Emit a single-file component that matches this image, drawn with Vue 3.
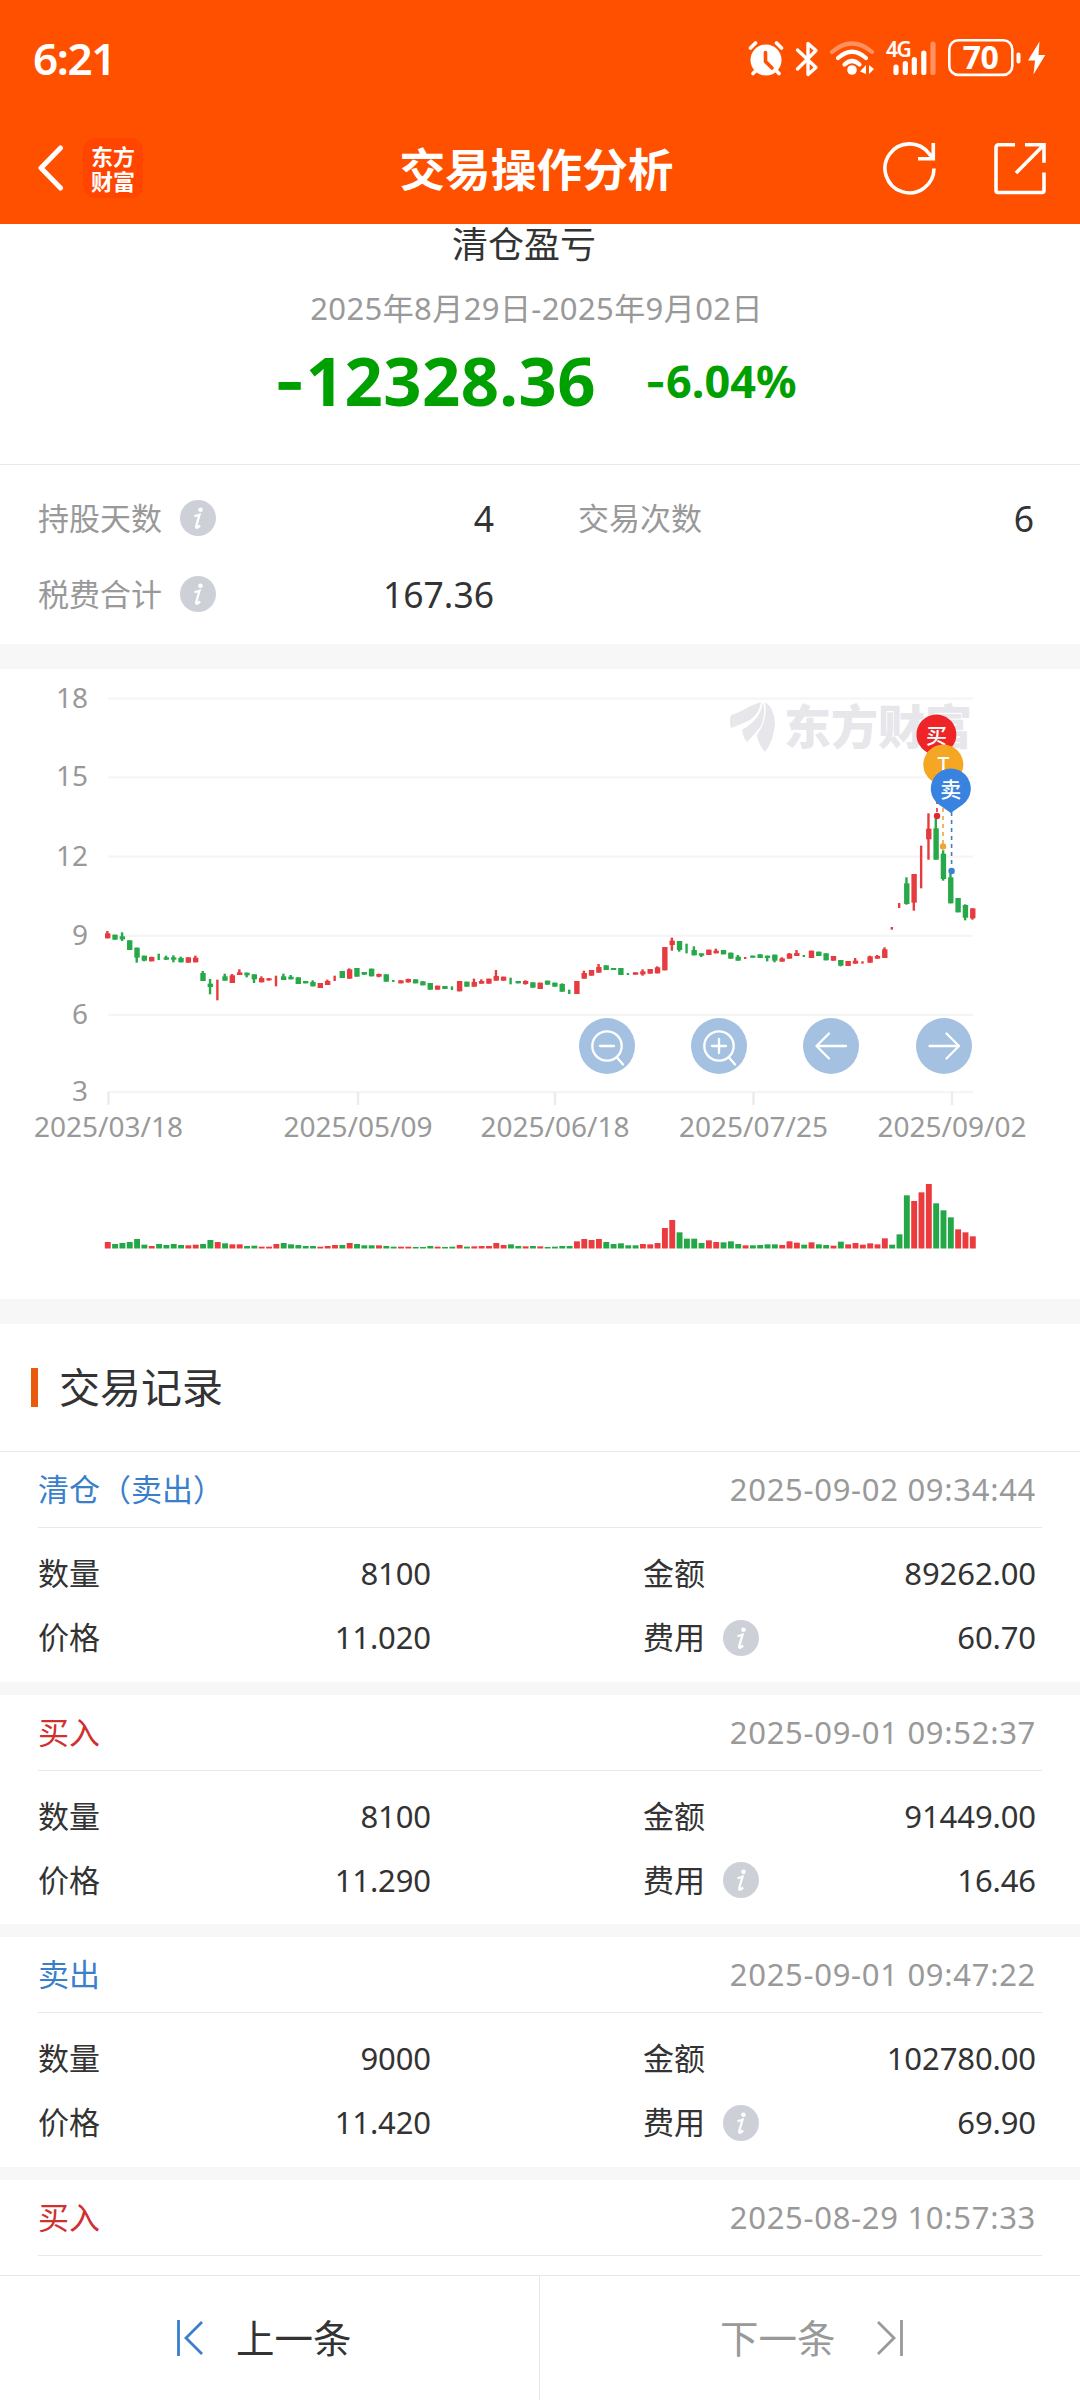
<!--
Componente: TradeAnalysis
Resumen de la operación, gráfico de velas con volumen y lista de registros.
-->

<template>
  <div class="page">
    <header class="top">
      <div class="status-bar">
        <span class="clock">6:21</span>
        <svg class="status-icons" viewBox="740 34 310 46" width="310" height="46" fill="none" stroke-linecap="round">
          <!-- alarma -->
          <circle cx="766" cy="60" r="15.5" fill="#fff" />
          <path d="M750.5 48l5-5M781.500 48l-5-5M753 73.500l5-5M779 73.500l-5-5" stroke="#fff" stroke-width="3.600" />
          <path d="M765.500 52.500v9l6.500 6.500" stroke="#ff5000" stroke-width="3.600" />
          <!-- bluetooth -->
          <path d="M797.500 50l18.500 17.500-8 7v-31l8 7-18.500 18.500" stroke="#fff" stroke-width="3.400" stroke-linejoin="round" />
          <!-- wifi -->
          <path d="M832 52q20-17 40 0" stroke="#ff9161" stroke-width="4.200" />
          <path d="M838 58q14-12.500 28 0M844.500 64.500q7.500-7 15 0" stroke="#fff" stroke-width="4.200" />
          <circle cx="852" cy="70" r="4.800" fill="#fff" />
          <path d="M860 71.500l6-6.500v9M869 74v-9l5 4-2 2" fill="#fff" />
          <text x="886" y="57" class="net-type">4G</text>
          <path d="M896 67v5.500M905.300 63.500v9M914.300 59.500v13M923.800 53v19.500" stroke="#fff" stroke-width="5.200" />
          <path d="M933 44v28.500" stroke="#ff9161" stroke-width="5.200" />
          <!-- batería -->
          <rect x="949.300" y="40.300" width="63" height="34.600" rx="9" stroke="#fff" stroke-width="2.600" />
          <path d="M1018.500 54.500v7" stroke="#fff" stroke-width="4" />
          <text x="980.500" y="69" text-anchor="middle" class="battery-level">70</text>
          <path d="M1039.500 41.500l-11.500 19h7l-1.500 14 11.800-19.500h-6.800z" fill="#fff" />
        </svg>
      </div>
      <div class="nav-bar">
        <div class="nav-left">
          <svg width="26" height="46" viewBox="0 0 26 46" fill="none" stroke="#fff" stroke-width="5" stroke-linecap="round" stroke-linejoin="round">
            <path d="M22.500 3L3 23l19.500 20" />
          </svg>
          <div class="brand"><span>东方</span><span>财富</span></div>
        </div>
        <h1>交易操作分析</h1>
        <div class="nav-right">
          <svg width="54" height="54" viewBox="0 0 54 54" fill="none" stroke="#fff" stroke-width="3.600">
            <path d="M51 27.500A24.500 24.500 0 1 1 46 12.500l4 4.500" />
            <path d="M50.300 2v15.700H35" />
          </svg>
          <svg width="52" height="54" viewBox="0 0 52 54" fill="none" stroke="#fff" stroke-width="3.600">
            <path d="M21 3.800H4.500a2.500 2.500 0 0 0-2.500 2.500v43.200a2 2 0 0 0 2 2h44a2 2 0 0 0 2-2V31.500" stroke-linejoin="round" />
            <path d="M31 3.800h19v18M50 3.800L22 32" />
          </svg>
        </div>
      </div>
    </header>

    <section class="summary">
      <div class="summary-title">清仓盈亏</div>
      <div class="summary-range">2025年8月29日-2025年9月02日</div>
      <div class="summary-profit">
        <span class="amount"><span class="minus">-</span>12328.36</span>
        <span class="percent"><span class="minus">-</span>6.04%</span>
      </div>
    </section>

    <section class="stats">
      <div v-for="s in stats" :key="s.label" class="stat">
        <span>{{ s.label }}</span>
        <svg v-if="s.info" class="info" viewBox="0 0 36 36">
          <circle cx="18" cy="18" r="18" fill="#cdd0d6" />
          <circle cx="20.500" cy="9.800" r="2.300" fill="#fff" />
          <path d="M14.500 16.200q3-.6 5-1.400l-3.300 11.500q-.4 2 1.400 1.200l2.600-2" fill="none" stroke="#fff" stroke-width="2.300" />
        </svg>
        <span class="stat-value">{{ s.value }}</span>
      </div>
    </section>

    <section class="chart">
      <svg viewBox="0 669 1080 630" width="1080" height="630">
        <g v-for="a in yAxis" :key="a.label">
          <rect x="108" :y="a.y - 1" width="865" height="2.200" fill="#f5f5f5" />
          <text x="88" :y="a.y + 9" text-anchor="end" class="axis">{{ a.label }}</text>
        </g>
        <g v-for="d in xAxis" :key="d.label">
          <rect :x="d.x - 1.200" y="1092" width="2.400" height="13" fill="#ececec" />
          <text :x="d.x" y="1136.500" text-anchor="middle" class="axis">{{ d.label }}</text>
        </g>

        <!-- marca de agua -->
        <g fill="#e6e6eb">
          <path d="M761 702C748 706 738 714 731 715Q729 722 731 728Q742 724 750 720Q760 713 761 702Z" />
          <path d="M763 702Q761 719 742 730Q743 737 747 742Q755 734 761 726Q766 715 763 702Z" />
          <path d="M765 702Q768 720 757 735Q758 744 765 752Q774 740 775 723Q774 708 765 702Z" />
          <text x="784" y="744" class="watermark">东方财富</text>
        </g>

        <g v-for="c in candles" :key="c.x" :fill="c.up ? '#e63c40' : '#28a84a'">
          <rect v-if="!c.thin" :x="c.x - 2.700" :y="c.top" width="5.400" :height="c.bottom - c.top" />
          <rect :x="c.x - 1.500" :y="c.high" width="2.400" :height="c.low - c.high" />
        </g>
        <rect v-for="v in volumes" :key="v.x" :x="v.x - 2.900" :y="1248.500 - v.h" width="5.900" :height="v.h" :fill="v.up ? '#eb3b3f' : '#24a747'" />

        <!-- marcadores de compra / venta -->
        <g fill="none" stroke-width="1.600" stroke-dasharray="4 4">
          <path d="M937 800v14" stroke="#dc3030" />
          <path d="M943 800v46" stroke="#eba53a" />
          <path d="M951.600 812v58" stroke="#477fb3" />
        </g>
        <circle cx="937" cy="816" r="3.200" fill="#dc2a30" />
        <circle cx="943" cy="846.500" r="3.200" fill="#eba53a" />
        <circle cx="951.600" cy="871" r="3.200" fill="#3d80d0" />
        <g v-for="p in pins" :key="p.text">
          <path :d="`M${p.x} ${p.y + 24}l-12-8.500a20 20 0 1 1 24 0z`" :fill="p.color" />
          <text :x="p.x" :y="p.y + 8" text-anchor="middle" class="pin">{{ p.text }}</text>
        </g>

        <!-- controles -->
        <g fill="none" stroke="#fff" stroke-width="2.300" stroke-linecap="round" stroke-linejoin="round">
          <circle v-for="x in [607, 719, 831, 944]" :key="x" :cx="x" cy="1046" r="28" fill="#a5c1e2" stroke="none" />
          <circle cx="607" cy="1046" r="14.700" />
          <path d="M600 1046h14M617 1057.500l6 7" />
          <circle cx="719" cy="1046" r="14.700" />
          <path d="M712 1046h14M719 1039v14M729 1057.500l6 7" />
          <path d="M846 1046h-29.500M829 1033.500l-12.500 12.500 12.500 12.500" />
          <path d="M929.500 1046h29.500M946.500 1033.500l12.500 12.500-12.500 12.500" />
        </g>
      </svg>
    </section>

    <section class="records">
      <h2>交易记录</h2>
      <article v-for="r in records" :key="r.time" class="record">
        <div class="record-head">
          <span :class="r.side">{{ r.type }}</span>
          <time>{{ r.time }}</time>
        </div>
        <div v-if="r.count" class="record-body">
          <div class="cell">数量<span>{{ r.count }}</span></div>
          <div class="cell">金额<span>{{ r.amount }}</span></div>
          <div class="cell">价格<span>{{ r.price }}</span></div>
          <div class="cell">费用
            <svg class="info" viewBox="0 0 36 36">
              <circle cx="18" cy="18" r="18" fill="#cdd0d6" />
              <circle cx="20.500" cy="9.800" r="2.300" fill="#fff" />
              <path d="M14.500 16.200q3-.6 5-1.400l-3.300 11.500q-.4 2 1.400 1.200l2.600-2" fill="none" stroke="#fff" stroke-width="2.300" />
            </svg>
            <span>{{ r.fee }}</span>
          </div>
        </div>
      </article>
    </section>

    <footer class="pager">
      <button class="prev">
        <svg width="28" height="36" viewBox="0 0 28 36" fill="none" stroke="#3a7fcc" stroke-width="2.800">
          <path d="M2.500 0v36M26 2L10 18l16 16" />
        </svg>
        上一条
      </button>
      <button class="next">
        下一条
        <svg width="28" height="36" viewBox="0 0 28 36" fill="none" stroke="#999" stroke-width="2.800">
          <path d="M25.500 0v36M2 2l16 16L2 34" />
        </svg>
      </button>
    </footer>
  </div>
</template>

<script setup>
const stats = [
  { label: '持股天数', value: '4', info: true },
  { label: '交易次数', value: '6' },
  { label: '税费合计', value: '167.36', info: true }
]

const yAxis = [
  { label: '18', y: 698.5 },
  { label: '15', y: 777.3 },
  { label: '12', y: 856.5 },
  { label: '9', y: 935.8 },
  { label: '6', y: 1014.8 },
  { label: '3', y: 1092 }
]

const xAxis = [
  { label: '2025/03/18', x: 108.5 },
  { label: '2025/05/09', x: 358 },
  { label: '2025/06/18', x: 555 },
  { label: '2025/07/25', x: 753.5 },
  { label: '2025/09/02', x: 952 }
]

const pins = [
  { text: '买', x: 936.4, y: 735, color: '#ee2427' },
  { text: 'T', x: 943.3, y: 765, color: '#f5a623' },
  { text: '卖', x: 950.8, y: 789, color: '#3882e0' }
]

const STEP = 7.331
const xAt = i => 107.7 + i * STEP

// color, máximo, cuerpo superior, cuerpo inferior, mínimo (mayúscula = vela fina)
const candleData = `
r 93 100 115 115,g 104 104 119 119,g 97 109 118 123,g 121 121 150 150,g 143 143 173 188,g 167 167 182 184,r 170 171 184 184,
G 161 164 180 180,g 167 172 179 180,g 166 172 179 187,g 170 174 187 187,r 172 172 188 188,r 167 173 187 187,g 213 219 243 243,
g 237 251 261 283,R 239 239 301 301,g 221 229 242 242,r 222 226 249 249,r 208 217 225 225,g 218 218 226 232,g 223 223 238 249,
r 229 234 247 247,r 234 235 241 242,R 227 227 259 259,g 221 229 240 240,g 225 230 238 238,g 232 232 252 252,g 243 243 250 250,
g 241 246 259 259,r 249 249 264 264,r 239 243 255 255,R 227 230 243 243,g 213 213 234 234,r 205 208 236 236,g 204 204 230 230,
g 216 216 224 224,g 206 206 229 229,r 221 222 230 232,g 223 223 245 245,G 240 240 246 246,r 241 241 250 250,r 236 237 247 248,
g 238 238 250 250,g 244 244 256 256,g 249 249 269 269,r 257 257 269 269,g 258 258 267 267,G 259 259 270 270,r 243 243 274 274,
g 245 245 260 260,r 236 246 260 260,r 238 243 251 251,r 236 236 251 251,r 210 228 242 242,r 230 230 242 242,G 233 233 253 253,
g 243 243 250 250,r 241 243 252 254,g 247 247 263 263,r 248 248 267 267,g 242 242 254 254,g 248 248 260 260,g 250 252 275 275,
G 269 269 282 282,r 243 243 282 282,r 212 219 236 236,r 210 210 227 227,r 192 201 218 218,g 196 196 210 210,g 204 204 210 210,
g 204 204 225 225,G 219 219 225 225,r 217 217 224 224,r 208 214 223 227,r 207 207 221 221,r 199 202 220 220,r 141 141 211 211,
r 113 122 135 152,g 123 123 150 155,G 131 131 160 160,g 139 150 166 166,g 160 160 167 171,r 149 149 165 165,r 146 152 160 160,
g 150 150 163 163,g 158 158 176 176,g 165 170 182 182,R 171 171 177 177,g 167 167 173 173,g 163 163 174 174,g 167 167 174 184,
g 164 164 182 187,r 172 175 185 185,r 159 161 176 176,r 150 159 168 168,G 165 165 171 171,r 152 152 174 174,g 155 155 168 168,
g 160 160 181 181,r 168 168 182 182,g 180 180 197 199,r 183 183 198 198,r 174 182 191 191,R 184 184 191 191,r 167 169 188 188,
r 165 168 176 176,r 142 148 174 174,R 81 81 89 89,R 9 14 21 24,g -68 -50 12 14,r -78 -78 8 32,R -163 -163 -35 -35,
r -260 -214 -182 -121,g -243 -215 -121 -121,g -149 -139 -63 -58,g -80 -68 10 10,g -6 -6 37 37,g 13 15 53 61,r 25 25 55 59`

const candles = candleData.trim().split(/,\s*/).map((row, i) => {
  const [kind, ...v] = row.split(' ')
  const [high, top, bottom, low] = v.map(n => 900 + n / 3)
  return { x: xAt(i), up: kind.toLowerCase() === 'r', thin: kind < 'a', high, top, bottom, low }
})

const volumeData =
  'r18 g12 g15 g18 g27 g10 r6 g12 g9 g12 g9 r8 r10 g12 g24 r18 g14 r11 r11 g6 g7 r4 r4 r12 g15 g11 g9 g6 g6 r4 ' +
  'r6 r9 g9 r15 g12 g8 g8 r8 g6 g4 r4 r4 g3 g3 g6 r4 g3 g4 r9 g4 r5 r6 r6 r15 r9 g11 g6 r5 g6 r5 g3 g4 g6 g6 ' +
  'r20 r27 r24 r27 g18 g12 g14 g8 g8 r12 r11 r15 r60 r84 g47 g28 g28 g15 r23 r18 g17 g20 g12 r8 g8 g9 g11 g11 ' +
  'r9 r20 r16 g10 r17 g11 g9 r7 g19 r11 r15 r10 r14 r11 r29 g10 g41 g158 r141 r167 r192 g134 g113 g92 r56 r47 r35'

const volumes = volumeData.split(' ').map((s, i) => ({
  x: xAt(i),
  up: s[0] === 'r',
  h: Number(s.slice(1)) / 3 + 0.5
}))

const records = [
  { type: '清仓（卖出）', side: 'sell', time: '2025-09-02 09:34:44', count: '8100', amount: '89262.00', price: '11.020', fee: '60.70' },
  { type: '买入', side: 'buy', time: '2025-09-01 09:52:37', count: '8100', amount: '91449.00', price: '11.290', fee: '16.46' },
  { type: '卖出', side: 'sell', time: '2025-09-01 09:47:22', count: '9000', amount: '102780.00', price: '11.420', fee: '69.90' },
  { type: '买入', side: 'buy', time: '2025-08-29 10:57:33' }
]
</script>

<style>
body {
  margin: 0;
  background: #fff;
}
</style>

<style scoped>
.page {
  width: 1080px;
  height: 2400px;
  overflow: hidden;
  display: flex;
  flex-direction: column;
  background: #fff;
  color: #333;
  font-family: "Noto Sans", "Noto Sans CJK SC", sans-serif;
  font-size: 31px;
  line-height: 1;
}

.top {
  height: 224px;
  flex: none;
  background: #ff5000;
  color: #fff;
}

.status-bar {
  display: flex;
  justify-content: space-between;
  align-items: center;
  height: 114px;
  padding: 0 30px 0 33px;
}

.clock {
  font-size: 44px;
  font-weight: 600;
  letter-spacing: -1.4px;
  padding-top: 2px;
}

.net-type {
  font: 600 21px "Noto Sans", sans-serif;
  letter-spacing: -1.6px;
  fill: #fff;
}

.battery-level {
  font: 700 32px "Noto Sans", sans-serif;
  letter-spacing: -0.5px;
  fill: #fff;
}

.nav-bar {
  display: grid;
  grid-template-columns: 1fr auto 1fr;
  align-items: center;
  height: 108px;
  padding: 0 34px 0 38px;
}

.nav-left {
  display: flex;
  align-items: center;
  gap: 19px;
}

.brand {
  width: 60px;
  height: 60px;
  border-radius: 12px;
  background: #ff4500;
  display: flex;
  flex-direction: column;
  align-items: center;
  justify-content: center;
  gap: 3px;
  font-size: 22px;
  font-weight: 700;
}

.nav-bar h1 {
  margin: 0;
  padding: 3px 11px 0 0;
  font-size: 45.7px;
  font-weight: 700;
}

.nav-right {
  display: flex;
  justify-content: flex-end;
  gap: 57px;
}

.summary {
  height: 240px;
  flex: none;
  border-bottom: 1px solid #e9e9e9;
  text-align: center;
}

.summary-title {
  padding: 2px 32px 0 0;
  font-size: 36px;
  line-height: 38px;
}

.summary-range {
  margin-top: 24px;
  padding-right: 7px;
  font-size: 31px;
  line-height: 40px;
  letter-spacing: 0.4px;
  color: #999;
}

.summary-profit {
  display: flex;
  align-items: center;
  height: 80px;
  margin-top: 13px;
  padding-left: 274px;
  color: #00a000;
  font-weight: 700;
}

.amount {
  font-size: 67px;
  letter-spacing: 0.4px;
  width: 371px;
  text-align: left;
}

.percent {
  font-size: 45px;
}

.minus {
  font-family: Inter, sans-serif;
}

.stats {
  flex: none;
  display: grid;
  grid-template-columns: 456px 456px;
  column-gap: 84px;
  grid-auto-rows: 76px;
  height: 129px;
  padding: 15px 38px 35px;
  border-bottom: 25px solid #f7f7f7;
  color: #999;
}

.stat {
  display: flex;
  align-items: center;
}

.info {
  width: 36px;
  height: 36px;
  margin-left: 18px;
}

.stat-value {
  margin-left: auto;
  padding-top: 1px;
  font-size: 35.5px;
  color: #333;
}

.chart {
  flex: none;
  height: 630px;
  border-bottom: 25px solid #f7f7f7;
}

.chart svg {
  display: block;
}

.axis {
  font-size: 28px;
  fill: #999;
}

.watermark {
  font-size: 47px;
  font-weight: 900;
}

.pin {
  font-size: 21px;
  font-weight: 500;
  fill: #fff;
}

.records {
  flex: 1;
  min-height: 0;
  overflow: hidden;
}

.records h2 {
  display: flex;
  align-items: center;
  gap: 21px;
  height: 127px;
  margin: 0;
  padding-left: 31px;
  border-bottom: 1px solid #e9e9e9;
  font-size: 41px;
  font-weight: 400;
}

.records h2::before {
  content: "";
  width: 7px;
  height: 39px;
  background: #e85a0c;
}

.record {
  height: 229.5px;
  border-bottom: 13px solid #f7f7f7;
}

.record-head {
  display: flex;
  align-items: center;
  justify-content: space-between;
  height: 75px;
  margin: 0 38px;
  padding-right: 6px;
  border-bottom: 1px solid #e9e9e9;
}

.record-head time {
  color: #999;
  letter-spacing: 0.7px;
}

.sell {
  color: #3a7fcc;
}

.buy {
  color: #d03030;
}

.record-body {
  display: grid;
  grid-template-columns: 393px 393px;
  column-gap: 212px;
  grid-auto-rows: 64px;
  padding: 13.500px 38px 0;
}

.cell {
  display: flex;
  align-items: center;
}

.cell > span {
  margin-left: auto;
  letter-spacing: -0.1px;
}

.pager {
  flex: none;
  display: flex;
  height: 124px;
  border-top: 1px solid #e6e6e6;
}

.pager button {
  flex: none;
  box-sizing: border-box;
  width: 540px;
  display: flex;
  align-items: center;
  padding: 0;
  border: 0;
  background: #fff;
  font: inherit;
  font-size: 38.5px;
}

.pager .prev {
  gap: 32px;
  padding-left: 176px;
  border-right: 1px solid #e6e6e6;
  color: #333;
}

.pager .next {
  gap: 40px;
  padding-left: 180px;
  color: #999;
}
</style>
